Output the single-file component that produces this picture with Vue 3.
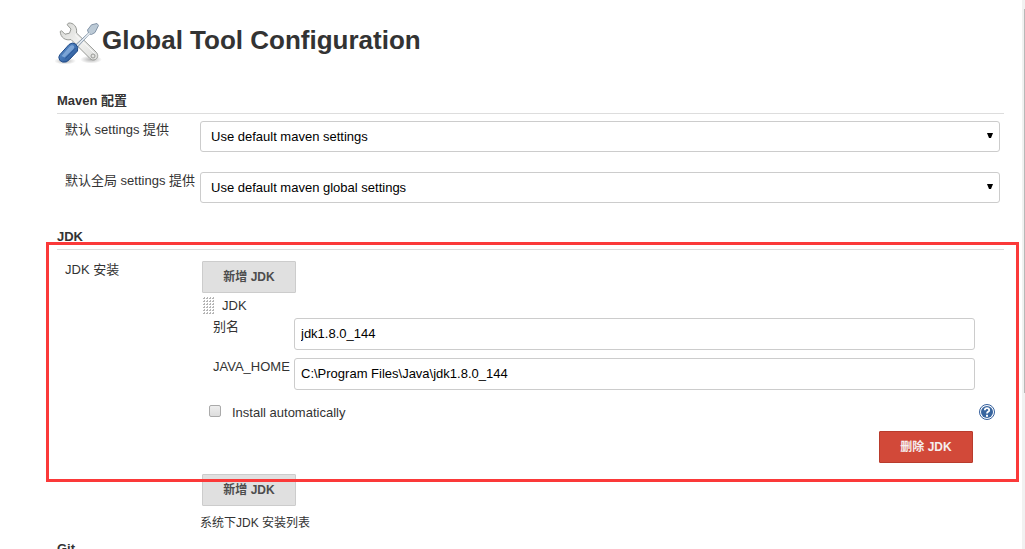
<script setup>
import { ref } from 'vue'

const mavenRows = [
  { id: 'settings', label: '默认 settings 提供', value: 'Use default maven settings' },
  { id: 'global-settings', label: '默认全局 settings 提供', value: 'Use default maven global settings' },
]
const jdkName = ref('jdk1.8.0_144')
const javaHome = ref('C:\\Program Files\\Java\\jdk1.8.0_144')
const autoInstall = ref(false)
</script>

<template>
  <div class="page">
    <main class="content">
      <header class="heading">
        <svg class="tools" viewBox="0 0 48 48" aria-hidden="true">
          <defs>
            <linearGradient id="steel" x1="0" y1="0" x2="1" y2="1">
              <stop offset="0" stop-color="#d4d5d2" />
              <stop offset="0.5" stop-color="#f2f2f0" />
              <stop offset="1" stop-color="#dcdddb" />
            </linearGradient>
            <linearGradient id="handle" x1="0" y1="0" x2="1" y2="1">
              <stop offset="0" stop-color="#6d9bd3" />
              <stop offset="0.5" stop-color="#4274b4" />
              <stop offset="1" stop-color="#234b87" />
            </linearGradient>
            <radialGradient id="shade">
              <stop offset="0" stop-color="#000" stop-opacity="0.3" />
              <stop offset="1" stop-color="#000" stop-opacity="0" />
            </radialGradient>
          </defs>
          <ellipse cx="10" cy="41" rx="11" ry="3.500" fill="url(#shade)" />
          <ellipse cx="36" cy="39.500" rx="11" ry="4" fill="url(#shade)" />
          <path
            d="M13.500 3C18.500 2.500 22.500 7 21.500 13L41.500 32.500C43.500 35 43 38 40.500 39.500C38.500 40.500 36.500 40 35 38.500L16 19.500C10.500 21 5.500 17.500 5.200 11.500L6.500 10.700L10 14.200L14.500 13.200L16 9L12.200 4.800Z"
            fill="url(#steel)" stroke="#979995" stroke-linejoin="round" />
          <path d="M20 14.500L39.500 33.500" stroke="#fafafa" fill="none" />
          <circle cx="38" cy="36" r="2" fill="#e4e4e2" stroke="#989a96" />
          <path
            d="M20.500 25L33.500 13L32.500 10L36.500 4.800L42 3.500L43.500 5.500L40 12.500L36.500 14.500L34.500 14L22.500 27Z"
            fill="#bccad6" stroke="#8495a8" stroke-linejoin="round" />
          <path d="M22 25.500L34.500 13.200" stroke="#e6ecf1" stroke-width="1.300" fill="none" />
          <path
            d="M14 24.500Q17.500 21.800 20.500 24Q24 27 22.500 31L14.500 39.500Q11.500 43 7.500 42Q4 41 3.800 37.500Q4 36 5 34.500Z"
            fill="url(#handle)" stroke="#204a87" stroke-linejoin="round" />
          <path d="M6.500 36L14.500 26.800Q17 24.300 19 26Q20 27.500 18 29.500L9.500 37.500Z" fill="#8fb4e0" opacity="0.75" />
          <path d="M10.500 38.500L20.500 28" stroke="#2c5899" fill="none" />
        </svg>
        <h1>Global Tool Configuration</h1>
      </header>

      <section class="section">
        <h2>Maven 配置</h2>
        <div v-for="row in mavenRows" :key="row.id" class="row maven-row">
          <label :for="row.id">{{ row.label }}</label>
          <div class="select-wrap">
            <select :id="row.id">
              <option>{{ row.value }}</option>
            </select>
            <svg class="arrow" viewBox="0 0 6 6" aria-hidden="true"><path d="M0 0H6L4 5H2Z" /></svg>
          </div>
        </div>
      </section>

      <section class="section jdk-section">
        <h2>JDK</h2>
        <div class="row jdk-row">
          <span class="row-title">JDK 安装</span>
          <div class="installations">
            <button type="button" class="btn">新增 JDK</button>
            <div class="drag-row">
              <svg class="grip" viewBox="0 0 12 18" aria-hidden="true">
                <defs>
                  <pattern id="dots" width="3" height="3" patternUnits="userSpaceOnUse">
                    <path d="M1 0H2V2H0V1H1Z" fill="#b4b4b4" />
                  </pattern>
                </defs>
                <rect width="12" height="18" fill="url(#dots)" />
              </svg>
              <span>JDK</span>
            </div>
            <div class="field">
              <label for="jdk-name">别名</label>
              <input id="jdk-name" v-model="jdkName" type="text">
            </div>
            <div class="field">
              <label for="java-home">JAVA_HOME</label>
              <input id="java-home" v-model="javaHome" type="text">
            </div>
            <div class="auto">
              <input id="auto-install" v-model="autoInstall" type="checkbox">
              <label for="auto-install">Install automatically</label>
              <button type="button" class="help" aria-label="Help">
                <svg viewBox="0 0 16 16" aria-hidden="true">
                  <circle cx="8" cy="8" r="7.500" fill="#fff" stroke="#345f9d" />
                  <circle cx="8" cy="8" r="6" fill="#38659f" />
                  <path d="M5.800 6.200Q5.800 4.200 8 4.200T10.200 6.200Q10.200 7.200 8.900 7.900Q8 8.400 8 9.600" fill="none" stroke="#fff" stroke-width="1.800" />
                  <rect x="7" y="10.800" width="2" height="2" fill="#fff" />
                </svg>
              </button>
            </div>
            <button type="button" class="btn danger">删除 JDK</button>
            <button type="button" class="btn">新增 JDK</button>
            <p class="hint">系统下JDK 安装列表</p>
          </div>
        </div>
        <div class="highlight"></div>
      </section>

      <section class="section">
        <h2>Git</h2>
      </section>
    </main>
    <div class="scrollbar"><div class="thumb"></div></div>
  </div>
</template>

<style>
html {
  overflow: hidden;
}
</style>

<style scoped>
.page {
  display: flex;
  height: 100vh;
  overflow: hidden;
  background: #fff;
  color: #333;
  font: 13px/18px "Liberation Sans", "Noto Sans CJK SC", sans-serif;
}
.page * {
  box-sizing: border-box;
}
.content {
  flex: 1;
  min-width: 0;
  padding: 20px 18px 0 57px;
}
.heading {
  display: flex;
  height: 48px;
  margin-bottom: 24px;
}
.tools {
  width: 48px;
  height: 48px;
  margin: 0 -1px 0 -2px;
  flex: none;
}
h1 {
  margin: 0;
  font-size: 26px;
  line-height: 40px;
}
h2 {
  margin: 0;
  height: 22px;
  border-bottom: 1px solid #ddd;
  font-size: 13px;
  line-height: 18px;
}
.row {
  display: grid;
  grid-template-columns: 135px minmax(0, 1fr);
  padding-left: 8px;
}
.maven-row {
  padding-top: 7px;
  padding-right: 4px;
  margin-bottom: 13px;
  white-space: nowrap;
}
.select-wrap {
  position: relative;
}
select,
input[type="text"] {
  display: block;
  width: 100%;
  height: 31px;
  border: 1px solid #ccc;
  border-radius: 3px;
  background: #fff;
  color: #000;
  font: inherit;
}
select {
  appearance: none;
  padding: 0 10px;
}
input[type="text"] {
  height: 32px;
  padding: 0 6px 2px;
}
.arrow {
  position: absolute;
  right: 7px;
  top: 12px;
  width: 6px;
  height: 6px;
}
.section {
  position: relative;
}
.jdk-section {
  margin-top: 25px;
}
.jdk-row {
  padding-top: 11px;
}
.installations {
  display: flex;
  flex-direction: column;
  align-items: flex-start;
  padding-left: 2px;
}
.btn {
  width: 94px;
  height: 32px;
  padding: 0;
  border: 1px solid #ccc;
  border-radius: 1px;
  background: #e0e0e0;
  color: #4d4d4d;
  font: inherit;
  font-size: 12px;
  font-weight: bold;
}
.drag-row {
  display: flex;
  gap: 7px;
  height: 25px;
  padding: 4px 0 0 1px;
}
.grip {
  width: 12px;
  height: 18px;
}
.field {
  display: grid;
  grid-template-columns: 81px minmax(0, 1fr);
  align-self: stretch;
  height: 32px;
  margin-bottom: 8px;
  padding: 0 29px 0 11px;
}
.auto {
  display: flex;
  align-items: flex-start;
  align-self: stretch;
  margin: 6px 9px 9px 7px;
}
.auto input {
  appearance: none;
  width: 12px;
  height: 12px;
  margin: 1px 11px 0 0;
  border: 1px solid #aaa;
  border-radius: 2px;
  background: linear-gradient(#eee, #ddd);
}
.help {
  width: 16px;
  height: 16px;
  margin-left: auto;
  padding: 0;
  border: 0;
  background: none;
}
.help svg {
  display: block;
}
.danger {
  align-self: flex-end;
  margin: 0 31px 11px 0;
  border-color: #b93b2c;
  background: #d24939;
  color: #f5eeee;
}
.hint {
  margin: 8px 0 0 -2px;
  font-size: 12px;
}
.jdk-section + .section {
  margin-top: 8px;
}
.highlight {
  position: absolute;
  top: 14px;
  left: -11px;
  right: -15px;
  height: 240px;
  border: 3px solid #fb3939;
  pointer-events: none;
}
.scrollbar {
  width: 3px;
  padding: 9px 0 0 2px;
  background: #f1f1f1;
}
.thumb {
  height: 70vh;
  background: #b8b8b8;
}
</style>
